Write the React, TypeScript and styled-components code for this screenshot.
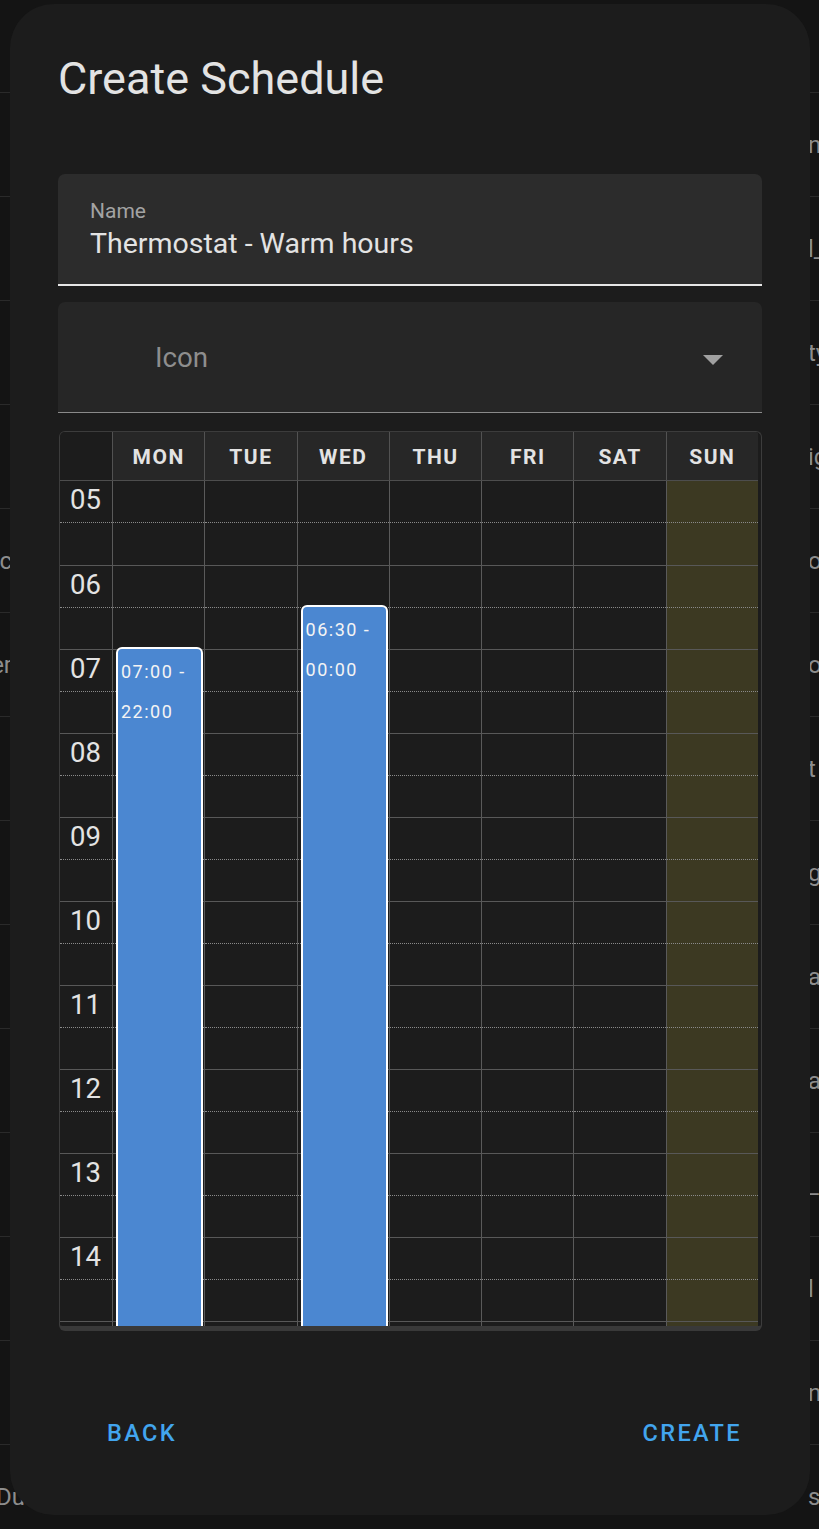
import React from "react";
import styled, { createGlobalStyle } from "styled-components";

const GlobalStyle = createGlobalStyle`
  html, body {
    margin: 0;
    padding: 0;
    background: #141414;
    font-family: Roboto, "Noto Sans", "Liberation Sans", sans-serif;
    overflow: hidden;
  }
  * {
    box-sizing: border-box;
  }
`;

const Page = styled.div`
  position: relative;
  width: 819px;
  height: 1529px;
  overflow: hidden;
`;

const BackList = styled.div`
  display: flex;
  flex-direction: column;
  margin-top: -11px;
`;

const BackRow = styled.div`
  height: 104px;
  display: flex;
  align-items: center;
  justify-content: space-between;
  border-bottom: 1px solid #2a2a2a;
  color: #8d8d8d;
  font-size: 24px;
  white-space: nowrap;
`;

const BackLeft = styled.span<{ $wide?: boolean }>`
  width: ${(p) => (p.$wide ? "38px" : "12px")};
  display: flex;
  justify-content: flex-end;
`;

const BackRight = styled.span`
  width: 11px;
  overflow: visible;
`;

const Dialog = styled.div`
  position: absolute;
  top: 4px;
  left: 10px;
  width: 800px;
  height: 1511px;
  background: #1c1c1c;
  border-radius: 44px;
  padding: 49px 48px 64px 48px;
  display: flex;
  flex-direction: column;
`;

const Title = styled.h2`
  margin: 0 0 69px 0;
  font-size: 45px;
  line-height: 52px;
  font-weight: 400;
  color: #e3e3e3;
`;

const TextField = styled.div`
  background: #2c2c2c;
  border-radius: 7px 7px 0 0;
  border-bottom: 2px solid #e6e6e6;
  padding: 25px 32px 24px 32px;
  display: flex;
  flex-direction: column;
  gap: 5px;
`;

const FieldLabel = styled.span`
  font-size: 21px;
  line-height: 24px;
  color: #a3a3a3;
`;

const FieldValue = styled.span`
  font-size: 28.5px;
  line-height: 32px;
  color: #e3e3e3;
`;

const SelectField = styled.div`
  margin-top: 16px;
  height: 111px;
  background: #262626;
  border-radius: 7px 7px 0 0;
  border-bottom: 1px solid #8a8a8a;
  display: flex;
  align-items: center;
  padding: 0 39px 0 97px;
`;

const Placeholder = styled.span`
  flex: 1;
  font-size: 27.7px;
  color: #8e8e8e;
`;

const Arrow = styled.svg`
  width: 20px;
  height: 10px;
  margin-top: 6px;
`;

const Grid = styled.div`
  margin-top: 18px;
  margin-left: 1px;
  border: 1px solid #3c3c3c;
  border-bottom: 5px solid #393939;
  border-radius: 6px;
  overflow: hidden;
  padding-right: 3px;
  background: #1c1c1c;
`;

const Columns = styled.div`
  display: grid;
  grid-template-columns: 52px repeat(7, 1fr);
`;

const HeaderRow = styled(Columns)`
  height: 49px;
  background: #272727;
  border-bottom: 1px solid #4d4d4d;
`;

const HeadCell = styled.div<{ $first?: boolean }>`
  display: flex;
  align-items: center;
  justify-content: center;
  padding-top: 2px;
  border-left: ${(p) => (p.$first ? "none" : "1px solid #525252")};
  font-size: 21px;
  font-weight: 700;
  letter-spacing: 1.5px;
  color: #e3e3e3;
  background: ${(p) => (p.$first ? "#1c1c1c" : "transparent")};
`;

const Body = styled.div`
  position: relative;
  height: 845px;
  overflow: hidden;
`;

const HourRow = styled(Columns)<{ $first?: boolean }>`
  height: 84px;
  border-top: ${(p) => (p.$first ? "none" : "1px solid #585858")};
`;

const Cell = styled.div<{ $today?: boolean; $time?: boolean }>`
  position: relative;
  border-left: ${(p) => (p.$time ? "none" : "1px solid #5a5a5a")};
  background: ${(p) => (p.$today ? "#3c3922" : "transparent")};
  &::after {
    content: "";
    position: absolute;
    left: 0;
    right: 0;
    top: 41px;
    border-top: 1px dotted #8a8a8a;
  }
`;

const HourLabel = styled.span`
  display: block;
  padding: 3px 0 0 10px;
  font-size: 27.5px;
  line-height: 32px;
  color: #e3e3e3;
`;

const EventLayer = styled(Columns)`
  position: absolute;
  inset: 0;
  pointer-events: none;
`;

const DayTrack = styled.div`
  position: relative;
`;

const EventBlock = styled.div`
  position: absolute;
  left: 4px;
  right: 1px;
  bottom: -10px;
  background: #4b87d1;
  border: 2px solid #ffffff;
  border-radius: 6px;
  padding: 3px 3px 0 3px;
  font-size: 18px;
  line-height: 40px;
  letter-spacing: 1.5px;
  color: #f4f4f4;
`;

const Footer = styled.div`
  margin-top: auto;
  display: flex;
  justify-content: space-between;
  padding: 1px 20px 0 49px;
`;

const TextButton = styled.button`
  background: none;
  border: none;
  padding: 0;
  font-family: inherit;
  font-size: 23.5px;
  line-height: 36px;
  font-weight: 500;
  letter-spacing: 2.4px;
  color: #42a5ee;
  cursor: pointer;
`;

const DAYS = ["MON", "TUE", "WED", "THU", "FRI", "SAT", "SUN"];
const HOURS = ["05", "06", "07", "08", "09", "10", "11", "12", "13", "14", "15"];
const START_HOUR = 5;
const HOUR_PX = 84;

const EVENTS: Record<number, { from: number; label: string }> = {
  0: { from: 7, label: "07:00 - 22:00" },
  2: { from: 6.5, label: "06:30 - 00:00" },
};

const BACK_ROWS = [
  { left: "", right: "" },
  { left: "", right: "n" },
  { left: "", right: "l_" },
  { left: "", right: "ty" },
  { left: "", right: "ig" },
  { left: "c", right: "o" },
  { left: "er", right: "o" },
  { left: "", right: "t" },
  { left: "", right: "g" },
  { left: "", right: "a" },
  { left: "", right: "a" },
  { left: "", right: "_a" },
  { left: "", right: "l" },
  { left: "", right: "n" },
  { left: "Dua", right: "st_" },
];

const App = () => {
  return (
    <Page>
      <GlobalStyle />
      <BackList>
        {BACK_ROWS.map((r, i) => (
          <BackRow key={i}>
            <BackLeft $wide={i === 14}>{r.left}</BackLeft>
            <BackRight>{r.right}</BackRight>
          </BackRow>
        ))}
      </BackList>
      <Dialog>
        <Title>Create Schedule</Title>
        <TextField>
          <FieldLabel>Name</FieldLabel>
          <FieldValue>Thermostat - Warm hours</FieldValue>
        </TextField>
        <SelectField>
          <Placeholder>Icon</Placeholder>
          <Arrow viewBox="0 0 20 10">
            <path d="M0 0 L20 0 L10 10 Z" fill="#a0a0a0" />
          </Arrow>
        </SelectField>
        <Grid>
          <HeaderRow>
            <HeadCell $first />
            {DAYS.map((d) => (
              <HeadCell key={d}>{d}</HeadCell>
            ))}
          </HeaderRow>
          <Body>
            {HOURS.map((h, i) => (
              <HourRow key={h} $first={i === 0}>
                <Cell $time>
                  <HourLabel>{h}</HourLabel>
                </Cell>
                {DAYS.map((d, di) => (
                  <Cell key={d} $today={di === 6} />
                ))}
              </HourRow>
            ))}
            <EventLayer>
              <div />
              {DAYS.map((d, di) => {
                const ev = EVENTS[di];
                return (
                  <DayTrack key={d}>
                    {ev && (
                      <EventBlock
                        style={{ top: (ev.from - START_HOUR) * HOUR_PX - 2 }}
                      >
                        {ev.label}
                      </EventBlock>
                    )}
                  </DayTrack>
                );
              })}
            </EventLayer>
          </Body>
        </Grid>
        <Footer>
          <TextButton>BACK</TextButton>
          <TextButton>CREATE</TextButton>
        </Footer>
      </Dialog>
    </Page>
  );
};

export default App;
